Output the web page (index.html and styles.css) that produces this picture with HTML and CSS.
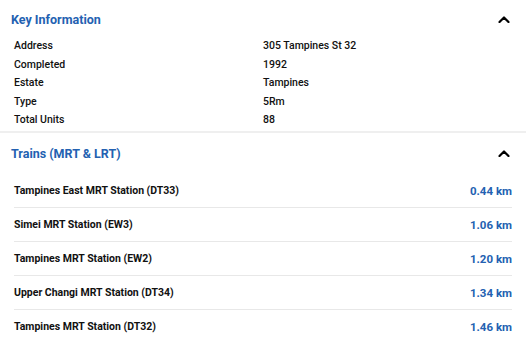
FILE: index.html
```html
<!DOCTYPE html>
<html>
<head>
<meta charset="utf-8">
<link rel="stylesheet" href="styles.css">
</head>
<body>
<section class="section">
  <div class="header">
    <h2 class="title">Key Information</h2>
    <svg class="chev" width="12" height="7" viewBox="0 0 12 7"><polyline points="1.5,6 6,1.5 10.5,6" fill="none" stroke="#000" stroke-width="2.2" stroke-linecap="round" stroke-linejoin="round"/></svg>
  </div>
  <div class="kv">
    <div class="k">Address</div><div class="v">305 Tampines St 32</div>
    <div class="k">Completed</div><div class="v">1992</div>
    <div class="k">Estate</div><div class="v">Tampines</div>
    <div class="k">Type</div><div class="v">5Rm</div>
    <div class="k">Total Units</div><div class="v">88</div>
  </div>
</section>
<section class="section second">
  <div class="header tall">
    <h2 class="title">Trains (MRT &amp; LRT)</h2>
    <svg class="chev" width="12" height="7" viewBox="0 0 12 7"><polyline points="1.5,6 6,1.5 10.5,6" fill="none" stroke="#000" stroke-width="2.2" stroke-linecap="round" stroke-linejoin="round"/></svg>
  </div>
  <ul class="list">
    <li class="row"><span class="name">Tampines East MRT Station (DT33)</span><span class="dist">0.44 km</span></li>
    <li class="row"><span class="name">Simei MRT Station (EW3)</span><span class="dist">1.06 km</span></li>
    <li class="row"><span class="name">Tampines MRT Station (EW2)</span><span class="dist">1.20 km</span></li>
    <li class="row"><span class="name">Upper Changi MRT Station (DT34)</span><span class="dist">1.34 km</span></li>
    <li class="row"><span class="name">Tampines MRT Station (DT32)</span><span class="dist">1.46 km</span></li>
  </ul>
</section>
</body>
</html>
```

FILE: styles.css
```css
html, body {
  margin: 0;
  padding: 0;
  background: #fff;
}
body {
  font-family: Roboto, "Noto Sans", "Liberation Sans", sans-serif;
  color: #111;
  width: 526px;
  height: 342px;
  overflow: hidden;
}
.section {
  display: flex;
  flex-direction: column;
}
.section.second {
  border-top: 2px solid #efefef;
}
.header {
  height: 37px;
  display: flex;
  align-items: center;
  justify-content: space-between;
  padding: 2px 11px 0 11px;
  box-sizing: border-box;
}
.header.tall {
  height: 41px;
  padding-top: 0;
}
.title {
  margin: 0;
  font-size: 12.5px;
  font-weight: 700;
  color: #2361b1;
}
.chev {
  display: block;
  margin-right: 5px;
}
.kv {
  display: grid;
  grid-template-columns: 249px 1fr;
  padding: 0 0 1.5px 14px;
  font-size: 10.5px;
  font-weight: 500;
  line-height: 18.5px;
}
.list {
  list-style: none;
  margin: 0;
  padding: 0 14px;
}
.row {
  display: flex;
  align-items: center;
  justify-content: space-between;
  height: 33px;
  border-bottom: 1px solid #e8e8e8;
}
.row:last-child {
  border-bottom: none;
}
.name {
  font-size: 10.5px;
  font-weight: 700;
}
.dist {
  font-size: 11.5px;
  font-weight: 700;
  color: #2361b1;
}
```
